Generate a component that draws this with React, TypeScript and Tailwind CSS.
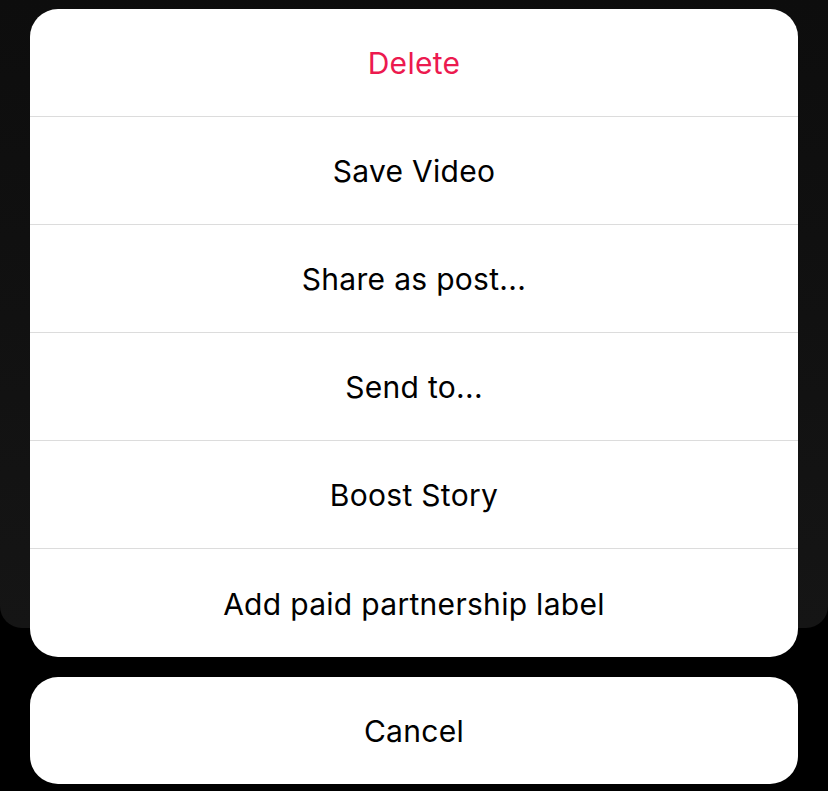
import React from "react";

const items = [
  { label: "Delete", red: true },
  { label: "Save Video" },
  { label: "Share as post..." },
  { label: "Send to..." },
  { label: "Boost Story" },
  { label: "Add paid partnership label" },
];

export default function App() {
  return (
    <div
      className="relative w-[828px] h-[791px] bg-black overflow-hidden"
      style={{ fontFamily: "Inter, 'Liberation Sans', sans-serif" }}
    >
      <div className="h-[628px] w-full bg-gradient-to-b from-[#0d0d0d] to-[#151515] rounded-b-[22px]" />
      <div className="absolute left-[30px] right-[30px] top-[9px] flex flex-col gap-[20px]">
        <div className="bg-white rounded-[28px] overflow-hidden flex flex-col">
          {items.map((it, i) => (
            <div
              key={it.label}
              className={
                i < items.length - 1
                  ? "h-[108px] pt-[2px] border-b border-[#dcdcdc] flex items-center justify-center"
                  : "h-[108px] pt-[2px] flex items-center justify-center"
              }
            >
              <span
                className={
                  it.red
                    ? "text-[30px] text-[#ec1a4f] tracking-[0.3px]"
                    : "text-[30px] text-black tracking-[0.3px]"
                }
              >
                {it.label}
              </span>
            </div>
          ))}
        </div>
        <div className="bg-white rounded-[28px] h-[107px] pt-[2px] flex items-center justify-center">
          <span className="text-[30px] text-black tracking-[0.3px]">Cancel</span>
        </div>
      </div>
    </div>
  );
}
